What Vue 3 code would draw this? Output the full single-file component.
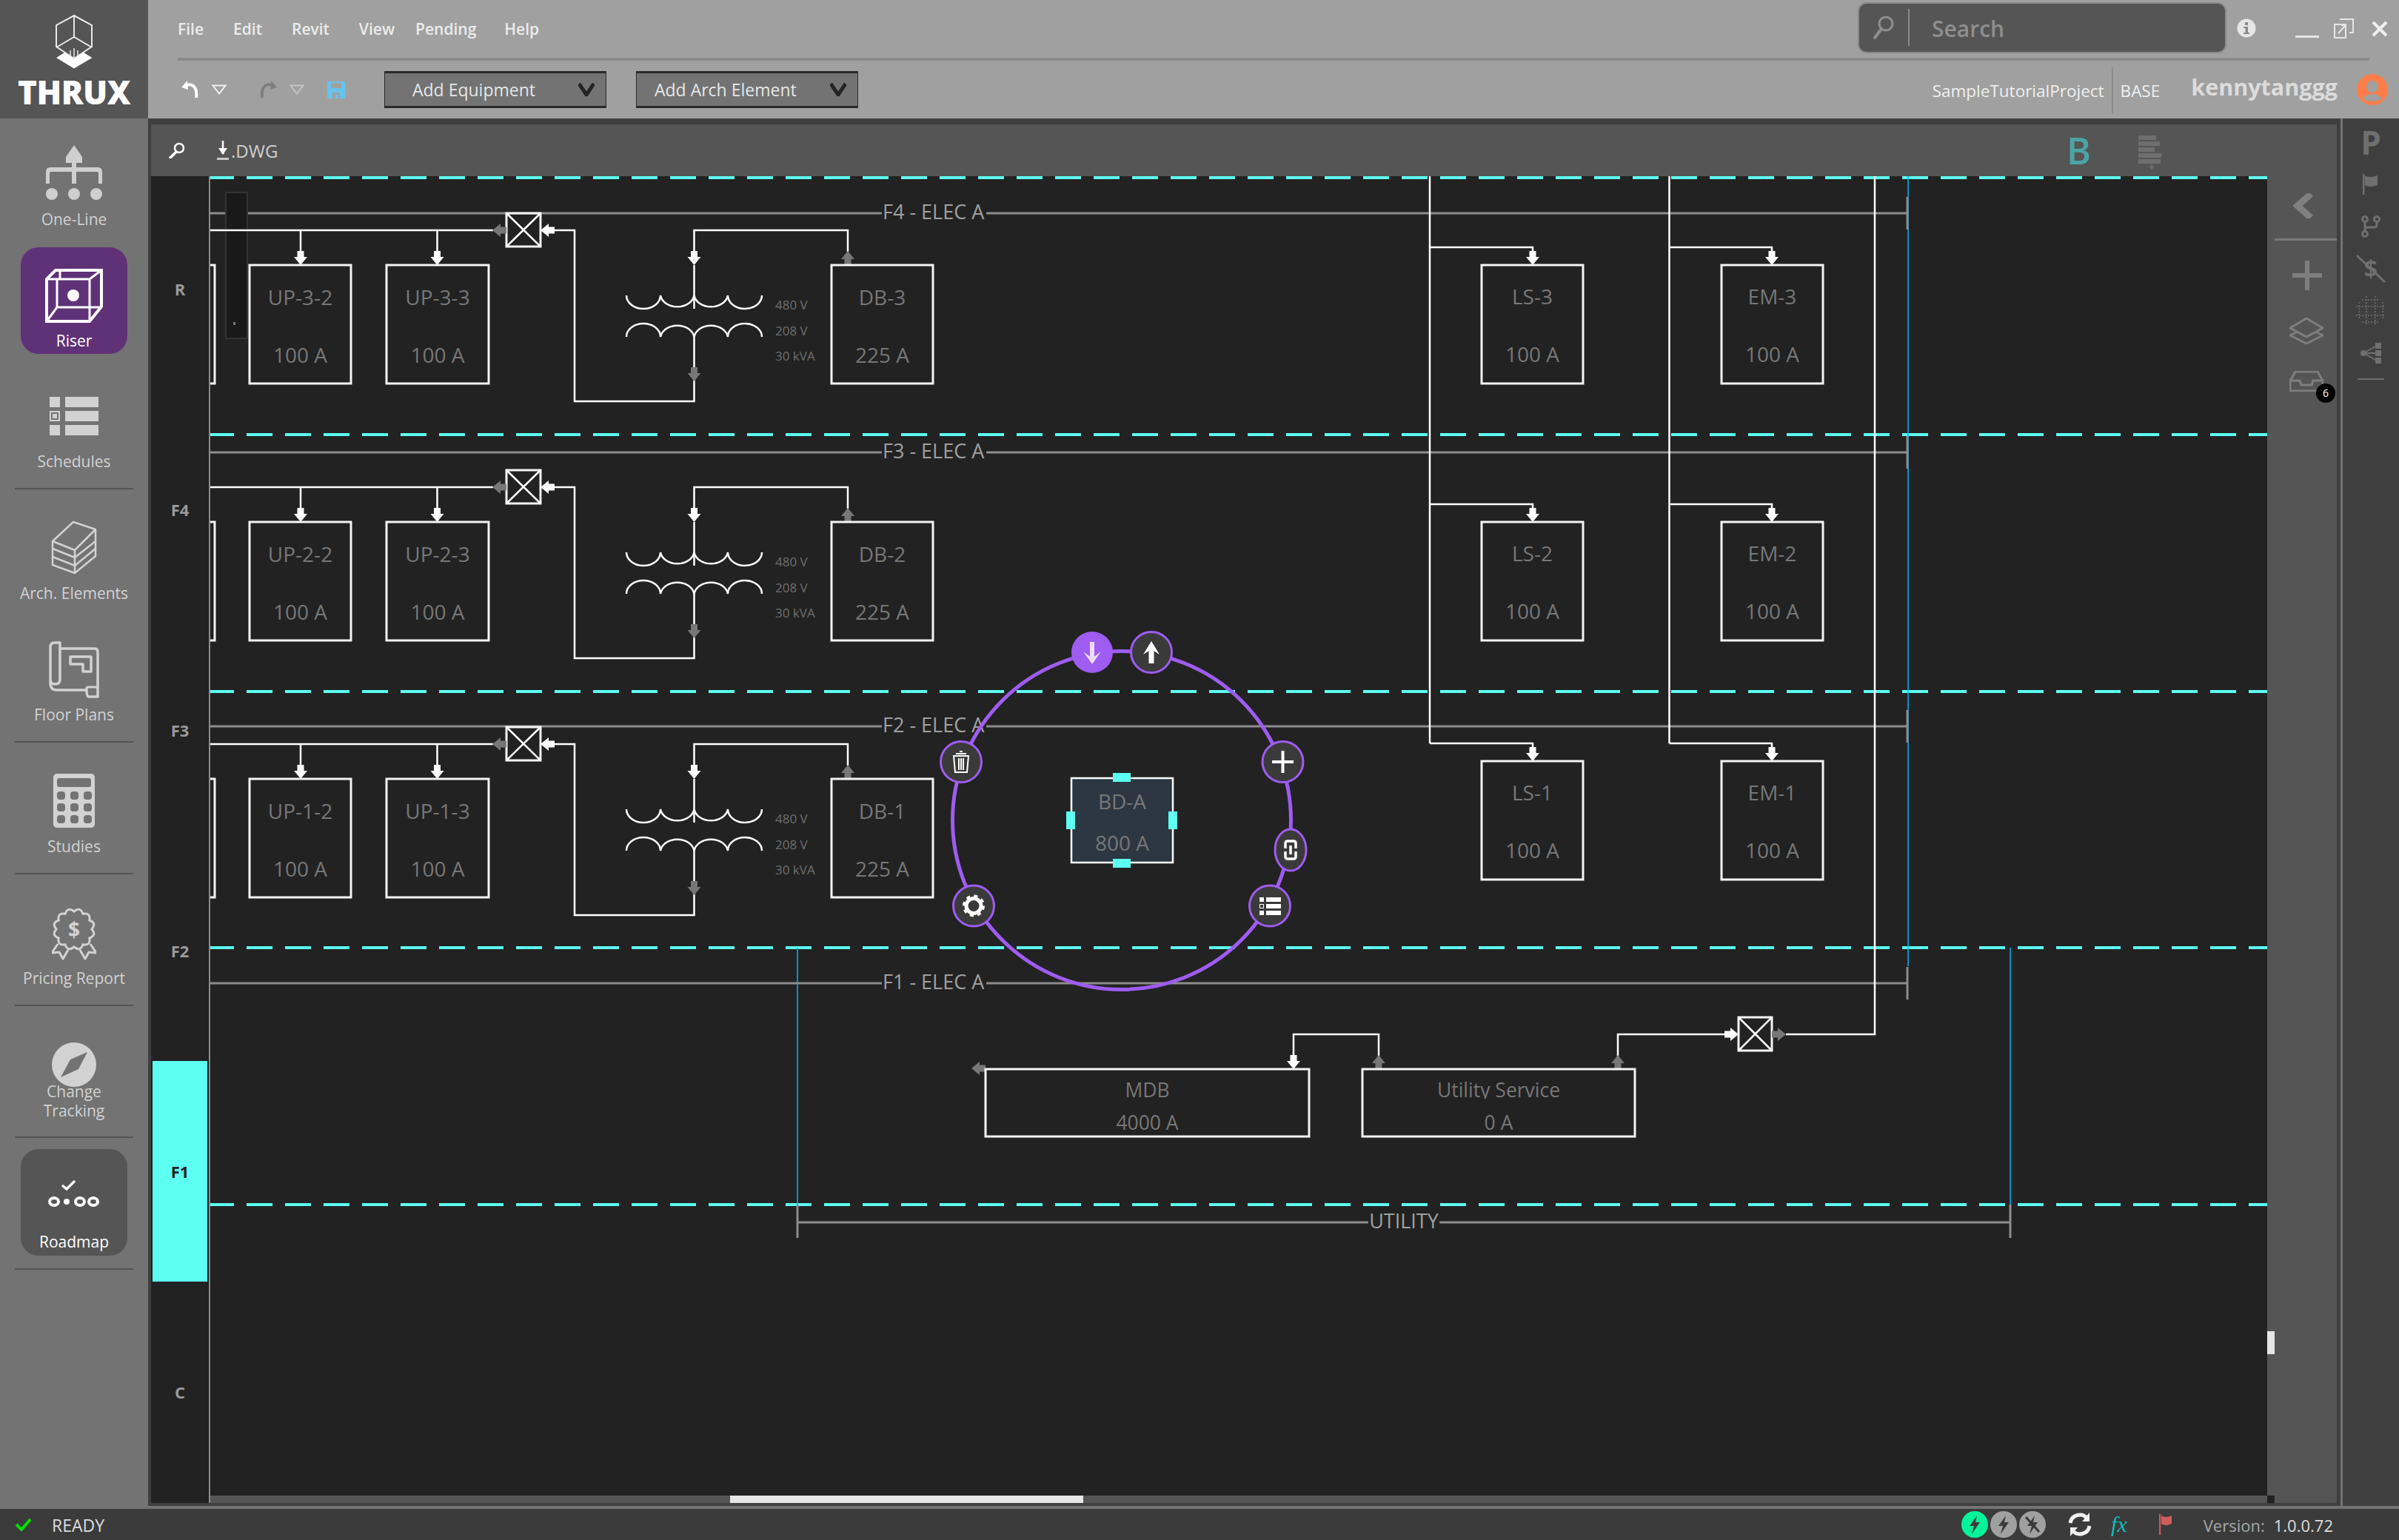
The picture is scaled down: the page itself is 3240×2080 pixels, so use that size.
<template>
  <div class="app">
    <!-- Top bar -->
    <div class="top">
      <div class="logo">
        <svg width="100" height="96" viewBox="50 4 100 96" class="logo-mark">
          <g fill="none" stroke="#e8e8e8" stroke-width="2">
            <path d="M100 21 L124 34 V63 L100 79 L76 63 V34 Z" />
            <path d="M100 21 V50 M76 64 L100 50 L124 64" />
            <path d="M95 68 V77 M100 65 V79 M105 68 V77" stroke-width="1.5" />
          </g>
          <path d="M76 78 L87 71 L100 79 L113 71 L124.5 78 L100 92.5 Z" fill="#fff" />
        </svg>
        <div class="logo-text">THRUX</div>
      </div>
      <div class="header">
        <div class="header-top">
          <div class="menu">
            <span v-for="m in menus" :key="m">{{ m }}</span>
          </div>
          <div class="search">
            <svg width="30" height="34" viewBox="0 0 30 34">
              <circle cx="18" cy="12" r="9" fill="none" stroke="#8f8f8f" stroke-width="3" />
              <path d="M12 19 L3 31" stroke="#8f8f8f" stroke-width="4" stroke-linecap="round" />
            </svg>
            <span class="search-divider"></span>
            <span class="search-text">Search</span>
          </div>
          <svg class="info" width="26" height="26" viewBox="0 0 26 26">
            <circle cx="13" cy="13" r="12.5" fill="#e6e6e6" />
            <rect x="11" y="5" width="4" height="4" fill="#8a8a8a" />
            <path d="M9 11 H15 V19 H17 V21 H9 V19 H11.5 V13 H9 Z" fill="#8a8a8a" />
          </svg>
          <svg class="win-min" width="32" height="4" viewBox="0 0 32 4"><rect width="32" height="3" fill="#e6e6e6" /></svg>
          <svg class="win-max" width="28" height="28" viewBox="0 0 28 28">
            <path d="M8 1 H26 V19 H21 M1 8 H16 V26 H1 Z" fill="none" stroke="#e6e6e6" stroke-width="2" />
            <path d="M6 20 L15 10 M10 9 H16 V15" fill="none" stroke="#e6e6e6" stroke-width="2" />
          </svg>
          <svg class="win-close" width="22" height="22" viewBox="0 0 22 22">
            <path d="M2 2 L20 20 M20 2 L2 20" stroke="#f0f0f0" stroke-width="4" />
          </svg>
        </div>
        <div class="header-line"></div>
        <div class="header-bottom">
          <svg class="undo" width="24" height="24" viewBox="0 0 24 24">
            <path d="M4 8 C12 2 22 6 20 23" fill="none" stroke="#fff" stroke-width="4" />
            <path d="M0 9 L8 0 L9 12 Z" fill="#fff" />
          </svg>
          <svg class="tri" width="20" height="14" viewBox="0 0 20 14"><path d="M1.5 1.5 H18.5 L10 12.5 Z" fill="none" stroke="#efefef" stroke-width="2" /></svg>
          <svg class="redo" width="24" height="24" viewBox="0 0 24 24">
            <path d="M20 8 C12 2 2 6 4 23" fill="none" stroke="#7e7e7e" stroke-width="4" />
            <path d="M24 9 L16 0 L15 12 Z" fill="#7e7e7e" />
          </svg>
          <svg class="tri" width="20" height="14" viewBox="0 0 20 14"><path d="M1.5 1.5 H18.5 L10 12.5 Z" fill="none" stroke="#c4c4c4" stroke-width="2" /></svg>
          <svg class="save" width="24" height="23" viewBox="0 0 24 23">
            <path d="M0 0 H24 V23 H0 Z M5 2 V9 H19 V2 Z M7 15 V23 H11 V18 H15 V23 H17 V15 Z" fill="#66c3ee" fill-rule="evenodd" />
          </svg>
          <div class="drop drop-equip">
            <span>Add Equipment</span>
            <svg width="22" height="18" viewBox="0 0 22 18"><path d="M1 1 L11 16 L21 1" fill="none" stroke="#242424" stroke-width="5" /></svg>
          </div>
          <div class="drop drop-arch">
            <span>Add Arch Element</span>
            <svg width="22" height="18" viewBox="0 0 22 18"><path d="M1 1 L11 16 L21 1" fill="none" stroke="#242424" stroke-width="5" /></svg>
          </div>
          <div class="project">
            <span>SampleTutorialProject</span>
            <span class="project-divider"></span>
            <span>BASE</span>
          </div>
          <div class="user">kennytanggg</div>
          <svg class="avatar" width="42" height="42" viewBox="0 0 42 42">
            <circle cx="21" cy="21" r="21" fill="#ff7d48" />
            <circle cx="21" cy="17" r="8" fill="#a0a0a0" />
            <path d="M8 33 C14 25 28 25 34 33 C28 38 14 38 8 33 Z" fill="#a0a0a0" />
          </svg>
        </div>
      </div>
    </div>

    <div class="main">
      <!-- Left nav -->
      <div class="sidebar">
        <div class="nav nav-oneline">
          <svg width="76" height="74" viewBox="0 0 76 74">
            <path d="M38 0 L49 16 V24 H41 V30 H70 Q76 30 76 36 V52 H71 V38 Q71 36 69 36 H41 V52 H35 V36 H7 Q5 36 5 38 V52 H0 V36 Q0 30 6 30 H35 V24 H27 V16 Z" fill="#cfcfcf" />
            <ellipse cx="8" cy="66" rx="8" ry="8" fill="#cfcfcf" />
            <ellipse cx="38" cy="66" rx="8" ry="8" fill="#cfcfcf" />
            <ellipse cx="68" cy="66" rx="8" ry="8" fill="#cfcfcf" />
          </svg>
          <div class="nav-label">One-Line</div>
        </div>
        <div class="nav nav-riser">
          <svg width="78" height="73" viewBox="0 0 78 73">
            <g fill="none" stroke="#fff" stroke-width="4">
              <path d="M2 14 L14 2 H76 V51 L60 71 H2 Z" />
              <path d="M2 14 H60 V71 M60 14 L76 2 M20 14 V2 M2 71 L16 52 H76 M16 14 V52" stroke-width="3" />
            </g>
            <ellipse cx="38" cy="36" rx="8" ry="8" fill="#fff" />
          </svg>
          <div class="nav-label">Riser</div>
        </div>
        <div class="nav nav-schedules">
          <svg width="66" height="52" viewBox="0 0 66 52">
            <g fill="#d2d2d2">
              <rect width="14" height="14" />
              <rect x="21" width="45" height="14" />
              <rect x="21" y="19" width="45" height="14" />
              <rect y="38" width="14" height="14" />
              <rect x="21" y="38" width="45" height="14" />
            </g>
            <rect x="1" y="20" width="12" height="12" fill="none" stroke="#d2d2d2" stroke-width="2" />
            <rect x="4" y="23" width="6" height="6" fill="#d2d2d2" />
          </svg>
          <div class="nav-label">Schedules</div>
        </div>
        <div class="sep"></div>
        <div class="nav nav-arch">
          <svg width="62" height="73" viewBox="0 0 62 73">
            <g fill="none" stroke="#d2d2d2" stroke-width="2.5" stroke-linejoin="round">
              <path d="M2 28 L30 2 L60 12 L32 40 Z" />
              <path d="M2 28 V60 L32 71 L60 48 V12 M32 40 V71" />
              <path d="M2 38 L32 50 L60 28 M2 49 L32 61 L60 38" />
            </g>
          </svg>
          <div class="nav-label">Arch. Elements</div>
        </div>
        <div class="nav nav-floor">
          <svg width="68" height="77" viewBox="0 0 68 77">
            <g fill="none" stroke="#d2d2d2" stroke-width="3.5" stroke-linejoin="round">
              <path d="M15 10 H62 Q66 10 66 15 V75 H54 Q51 75 51 66 H10 Q2 66 2 56 V8 Q2 2 8 2 H15 V52 Q15 58 8 58 Q2 58 2 52" />
              <path d="M51 62 V66 M51 62 H66" stroke-width="3" />
              <path d="M29 21 H57 V41 H46 V31 H29 Z" />
            </g>
          </svg>
          <div class="nav-label">Floor Plans</div>
        </div>
        <div class="sep"></div>
        <div class="nav nav-studies">
          <svg width="56" height="73" viewBox="0 0 56 73">
            <rect width="56" height="73" rx="5" fill="#d2d2d2" />
            <rect x="5" y="6" width="46" height="12" rx="3" fill="#737373" />
            <template v-for="row in [24, 40, 56]" :key="row">
              <rect v-for="col in [5, 23, 41]" :key="col" :x="col" :y="row" width="11" height="11" rx="4" fill="#737373" />
            </template>
          </svg>
          <div class="nav-label">Studies</div>
        </div>
        <div class="sep"></div>
        <div class="nav nav-pricing">
          <svg width="60" height="72" viewBox="0 0 60 72">
            <path :d="badgePath" fill="none" stroke="#d2d2d2" stroke-width="3" />
            <text x="30" y="30" class="dollar" text-anchor="middle">$</text>
            <path d="M8 50 L0 62 L10 61 L15 70 L22 58 M52 50 L60 62 L50 61 L45 70 L38 58" fill="none" stroke="#d2d2d2" stroke-width="3" stroke-linejoin="round" />
          </svg>
          <div class="nav-label">Pricing Report</div>
        </div>
        <div class="sep"></div>
        <div class="nav nav-change">
          <svg width="60" height="60" viewBox="0 0 60 60">
            <circle cx="30" cy="30" r="30" fill="#d2d2d2" />
            <path d="M48 13 L25 23 L12 47 L36 36 Z" fill="#737373" />
          </svg>
          <div class="nav-label">Change<br />Tracking</div>
        </div>
        <div class="sep"></div>
        <div class="nav nav-roadmap">
          <svg width="70" height="38" viewBox="0 0 70 38">
            <path d="M19 7 L25 12 L36 1" fill="none" stroke="#fff" stroke-width="3.5" />
            <g fill="none" stroke="#fff" stroke-width="4">
              <ellipse cx="8" cy="29" rx="6" ry="5" />
              <ellipse cx="43" cy="29" rx="6" ry="5" />
              <ellipse cx="61" cy="29" rx="6" ry="5" />
            </g>
            <circle cx="25" cy="29" r="4" fill="#fff" />
          </svg>
          <div class="nav-label">Roadmap</div>
        </div>
        <div class="sep sep-last"></div>
      </div>

      <!-- Work area -->
      <div class="work">
        <div class="tools">
          <svg class="tool-search" width="22" height="22" viewBox="0 0 22 22">
            <circle cx="14" cy="8" r="6" fill="none" stroke="#fff" stroke-width="2.5" />
            <path d="M10 13 L2 21" stroke="#fff" stroke-width="3.5" stroke-linecap="round" />
          </svg>
          <svg class="tool-down" width="18" height="28" viewBox="0 0 18 28">
            <path d="M9 1 V19" stroke="#fff" stroke-width="2.5" />
            <path d="M3 11 L9 20 L15 11 Z" fill="#fff" />
            <rect x="1" y="24" width="16" height="3" fill="#c8c8c8" />
          </svg>
          <span class="tool-dwg">.DWG</span>
          <span class="tool-b">B</span>
          <svg class="tool-sort" width="32" height="46" viewBox="0 0 32 46">
            <g fill="#6f6f6f">
              <rect width="24" height="6" />
              <rect y="8" width="29" height="6" />
              <rect y="16" width="22" height="6" />
              <rect y="24" width="31" height="6" />
              <rect y="32" width="30" height="6" />
            </g>
            <path d="M18 37 V45 M15 41 L18 45 L21 41" fill="none" stroke="#6f6f6f" stroke-width="1.5" />
          </svg>
        </div>
        <div class="body">
          <div class="floors">
            <div v-for="f in floors" :key="f" class="floor" :class="{ active: f === 'F1' }">{{ f }}</div>
          </div>
          <div class="canvas-wrap">
            <svg class="riser" width="2778" height="1782" viewBox="284 238 2778 1782">
              <defs>
                <clipPath id="wide-name"><rect x="1331" y="1444" width="877" height="40" /></clipPath>
              </defs>

              <!-- level lines -->
              <path v-for="y in levels" :key="y" :d="`M281 ${y} H3062`" class="level" />

              <!-- blue guides -->
              <path d="M2577 238 V1305 M1077 1280 V1627 M2715 1280 V1627" class="guide" />

              <!-- feeder lines with names -->
              <template v-for="b in buses" :key="b.label">
                <path :d="`M284 ${b.y} H1191 M1332 ${b.y} H2575`" class="bus" />
                <path :d="`M2576 ${b.y - 22} V${b.y + 22}`" class="bus" />
                <text x="1192" :y="b.y - 3" class="bus-label">{{ b.label }}</text>
              </template>
              <path d="M1077 1651 H1848 M1944 1651 H2715 M1077 1627 V1672 M2715 1627 V1672" class="bus" />
              <text x="1896" y="1648" class="bus-label" text-anchor="middle">UTILITY</text>

              <!-- scroller that sits on the top row -->
              <rect x="305" y="260" width="29" height="197" fill="#191919" stroke="#333" stroke-width="2" />
              <rect x="315" y="435" width="3" height="4" fill="#777" />

              <!-- wires -->
              <path v-for="(w, i) in wires" :key="i" :d="w" class="wire" />
              <path d="M846 399 A23 18 0 0 0 892 399 A23 18 0 0 0 937.5 399 A23 18 0 0 0 983 399 A23 18 0 0 0 1029 399" class="wire" v-for="dy in rowOffsets" :key="'a' + dy" :transform="`translate(0 ${dy})`" />
              <path d="M846 455 A23 18 0 0 1 892 455 A23 18 0 0 1 937.5 455 A23 18 0 0 1 983 455 A23 18 0 0 1 1029 455" class="wire" v-for="dy in rowOffsets" :key="'b' + dy" :transform="`translate(0 ${dy})`" />

              <!-- breakers -->
              <g v-for="b in breakers" :key="b.x + '-' + b.y">
                <rect :x="b.x" :y="b.y" :width="b.w" height="45" class="box" />
                <path :d="`M${b.x} ${b.y} L${b.x + b.w} ${b.y + 45} M${b.x + b.w} ${b.y} L${b.x} ${b.y + 45}`" class="wire" />
              </g>

              <!-- arrows -->
              <polygon v-for="(a, i) in whiteArrows" :key="'w' + i" :points="arrow(a[0], a[1], a[2])" fill="#fff" />
              <polygon v-for="(a, i) in grayArrows" :key="'g' + i" :points="arrow(a[0], a[1], a[2])" fill="#777" />

              <!-- panels -->
              <g v-for="p in panels" :key="p.name">
                <rect :x="p.x" :y="p.y" :width="p.w" :height="p.h" class="box" />
                <text :x="p.x + p.w / 2" :y="p.t1" class="panel-text" :class="{ wide: p.h < 100 }" :clip-path="p.h < 100 ? 'url(#wide-name)' : null" text-anchor="middle">{{ p.name }}</text>
                <text :x="p.x + p.w / 2" :y="p.t2" class="panel-text" :class="{ wide: p.h < 100 }" text-anchor="middle">{{ p.amps }}</text>
              </g>
              <path v-for="dy in rowOffsets" :key="'c' + dy" :d="`M284 ${358 + dy} H290 V${518 + dy} H284`" class="box-edge" />

              <!-- transformer ratings -->
              <template v-for="dy in rowOffsets" :key="'t' + dy">
                <text x="1047" :y="411 + dy" class="rating">480 V</text>
                <text x="1047" :y="446 + dy" class="rating">208 V</text>
                <text x="1047" :y="480 + dy" class="rating">30 kVA</text>
              </template>

              <!-- radial menu -->
              <circle cx="1515" cy="1108" r="228.5" class="ring" />
              <rect x="1447" y="1051" width="137" height="114" fill="#2c3743" stroke="#fff" stroke-width="2.5" />
              <text x="1515.5" y="1082" class="panel-text" text-anchor="middle">BD-A</text>
              <text x="1515.5" y="1138" class="panel-text" text-anchor="middle">800 A</text>
              <g fill="#5cfff2">
                <rect x="1503" y="1044" width="24" height="12" />
                <rect x="1503" y="1160" width="24" height="12" />
                <rect x="1440" y="1096" width="12" height="24" />
                <rect x="1578" y="1096" width="12" height="24" />
              </g>
              <circle cx="1475" cy="881" r="28" fill="#9f5cf0" />
              <path d="M1475 867 V894" stroke="#ecdcff" stroke-width="6" />
              <path d="M1463 880 L1475 897 L1487 880 L1475 889 Z" fill="#ecdcff" />
              <circle cx="1555" cy="881" r="27.5" class="ring-btn" />
              <path d="M1555 871 V896" stroke="#fff" stroke-width="7" />
              <path d="M1544 884 L1555 866 L1566 884 L1555 877 Z" fill="#fff" />
              <circle cx="1298" cy="1029" r="27.5" class="ring-btn" />
              <path d="M1288 1021 H1308 L1306 1043 H1290 Z M1291 1018 H1305 M1296 1015 H1300 M1295 1024 V1040 M1298 1024 V1040 M1301 1024 V1040" fill="none" stroke="#fff" stroke-width="2" />
              <circle cx="1732.5" cy="1029" r="27.5" class="ring-btn" />
              <path d="M1718 1029 H1747 M1732.5 1014 V1044" stroke="#fff" stroke-width="4" />
              <ellipse cx="1743" cy="1148" rx="21" ry="28" class="ring-btn" />
              <path d="M1736 1146 V1139 Q1736 1136 1739 1136 H1747 Q1750 1136 1750 1139 V1146 M1736 1150 V1157 Q1736 1160 1739 1160 H1747 Q1750 1160 1750 1157 V1150 M1743 1142 V1154" fill="none" stroke="#fff" stroke-width="3.5" />
              <circle cx="1315" cy="1223.5" r="27.5" class="ring-btn" />
              <circle cx="1315" cy="1223.5" r="10" fill="none" stroke="#fff" stroke-width="5" />
              <circle cx="1315" cy="1223.5" r="13" fill="none" stroke="#fff" stroke-width="4" stroke-dasharray="5 5.2" />
              <circle cx="1715" cy="1223.5" r="27.5" class="ring-btn" />
              <g fill="#fff">
                <rect x="1701" y="1212" width="6" height="6" />
                <rect x="1710" y="1212" width="20" height="6" />
                <rect x="1710" y="1221" width="20" height="6" />
                <rect x="1701" y="1230" width="6" height="6" />
                <rect x="1710" y="1230" width="20" height="6" />
              </g>
              <rect x="1701.5" y="1221.5" width="5" height="5" fill="none" stroke="#fff" stroke-width="1" />
            </svg>
            <div class="hscroll"><div class="hthumb"></div></div>
          </div>
          <div class="panel">
            <div class="vthumb"></div>
            <div class="corner"></div>
            <svg class="p-chevron" width="30" height="34" viewBox="0 0 30 34"><path d="M24 1 L6 17 L24 33" fill="none" stroke="#808080" stroke-width="9" /></svg>
            <div class="panel-sep"></div>
            <svg class="p-plus" width="40" height="40" viewBox="0 0 40 40"><path d="M0 20 H40 M20 0 V40" stroke="#7e7e7e" stroke-width="6" /></svg>
            <svg class="p-layers" width="46" height="36" viewBox="0 0 46 36">
              <path d="M23 1 L45 14 L23 26 L1 14 Z" fill="none" stroke="#7e7e7e" stroke-width="3" />
              <path d="M9 20 L1 24 L23 35 L45 24 L37 20" fill="none" stroke="#7e7e7e" stroke-width="3" />
            </svg>
            <div class="p-inbox">
              <svg width="46" height="28" viewBox="0 0 46 28">
                <path d="M1 13 L8 1 H38 L45 13 V27 H1 Z M1 13 H14 L16 19 H30 L32 13 H45" fill="none" stroke="#7e7e7e" stroke-width="3" />
              </svg>
              <span class="badge">6</span>
            </div>
          </div>
        </div>
      </div>

      <!-- Right strip -->
      <div class="strip">
        <div class="strip-slot"><span class="strip-p">P</span></div>
        <div class="strip-slot">
          <svg width="22" height="28" viewBox="0 0 22 28">
            <path d="M1 0 V28" stroke="#6f6f6f" stroke-width="3" />
            <path d="M3 2 Q9 6 20 2 V15 Q9 19 3 15 Z" fill="#6f6f6f" />
          </svg>
        </div>
        <div class="strip-slot">
          <svg width="26" height="32" viewBox="0 0 26 32">
            <g fill="none" stroke="#6f6f6f" stroke-width="3">
              <circle cx="5" cy="6" r="3.5" />
              <circle cx="21" cy="6" r="3.5" />
              <circle cx="5" cy="26" r="3.5" />
              <path d="M5 10 V22 M21 10 V14 Q21 17 17 17 H9 Q5 17 5 20" />
            </g>
          </svg>
        </div>
        <div class="strip-slot">
          <div class="strip-dollar">
            $
            <svg width="40" height="38" viewBox="0 0 40 38"><path d="M1 1 L39 37" stroke="#6f6f6f" stroke-width="3" /></svg>
          </div>
        </div>
        <div class="strip-slot">
          <svg width="42" height="42" viewBox="0 0 42 42">
            <g fill="none" stroke="#646464" stroke-width="2" stroke-dasharray="2 2">
              <path d="M15 1 V41 M27 1 V41 M1 15 H41 M1 27 H41" />
              <path d="M9 6 H33 M5 9 V33 M37 9 V33 M9 36 H33" />
            </g>
          </svg>
        </div>
        <div class="strip-slot">
          <svg width="28" height="28" viewBox="0 0 28 28">
            <g fill="#6f6f6f">
              <circle cx="4" cy="14" r="4" />
              <rect x="20" y="0" width="8" height="8" />
              <rect x="20" y="10" width="8" height="8" />
              <rect x="20" y="20" width="8" height="8" />
            </g>
            <path d="M4 14 L22 4 M4 14 H22 M4 14 L22 24" stroke="#6f6f6f" stroke-width="2" />
          </svg>
        </div>
        <div class="strip-sep"></div>
      </div>
    </div>

    <!-- Status bar -->
    <div class="status">
      <svg class="ok" width="21" height="18" viewBox="0 0 21 18"><path d="M1 9 L8 16 L20 2" fill="none" stroke="#00e000" stroke-width="4" /></svg>
      <span class="ready">READY</span>
      <div class="status-right">
        <div class="bolts">
          <svg v-for="(c, i) in ['#00f59b', '#a0a0a0', '#a0a0a0']" :key="i" width="36" height="36" viewBox="0 0 36 36">
            <circle cx="18" cy="18" r="18" :fill="c" />
            <path d="M21 6 L11 20 H17 L14 31 L25 15 H19 Z" fill="#3b3b3b" />
            <path v-if="i === 2" d="M9 8 L27 28" stroke="#3b3b3b" stroke-width="3" />
          </svg>
        </div>
        <svg class="sync" width="32" height="34" viewBox="0 0 32 34">
          <path d="M3 15 A13 13 0 0 1 26 9 M29 19 A13 13 0 0 1 6 25" fill="none" stroke="#f0f0f0" stroke-width="5" />
          <path d="M29 1 V13 H19 Z M3 33 V21 H13 Z" fill="#f0f0f0" />
        </svg>
        <span class="fx">fx</span>
        <svg class="flag" width="18" height="28" viewBox="0 0 18 28">
          <path d="M1 0 V28" stroke="#c95a5a" stroke-width="2.5" />
          <path d="M3 2 Q9 6 17 2 V13 Q9 17 3 13 Z" fill="#d05c5c" />
        </svg>
        <span class="version">Version:</span>
        <span class="version-no">1.0.0.72</span>
      </div>
    </div>
  </div>
</template>

<script setup>
const menus = ['File', 'Edit', 'Revit', 'View', 'Pending', 'Help']
const floors = ['R', 'F4', 'F3', 'F2', 'F1', 'C']
const levels = [240, 587, 934, 1280, 1627]
const rowOffsets = [0, 347, 694]

const buses = [
  { label: 'F4 - ELEC A', y: 288 },
  { label: 'F3 - ELEC A', y: 611 },
  { label: 'F2 - ELEC A', y: 981 },
  { label: 'F1 - ELEC A', y: 1328 }
]

// Arrow polygon, tip at x,y
const arrow = (x, y, dir) => {
  const [dx, dy] = { down: [0, 1], up: [0, -1], left: [-1, 0], right: [1, 0] }[dir]
  const px = -dy
  const py = dx
  const at = (back, side) => `${x - dx * back + px * side},${y - dy * back + py * side}`
  return [at(0, 0), at(11, 9), at(11, 4.5), at(19, 4.5), at(19, -4.5), at(11, -4.5), at(11, -9)].join(' ')
}

const wires = []
const whiteArrows = []
const grayArrows = []
const panels = []
const breakers = []

rowOffsets.forEach((dy, i) => {
  const n = 3 - i
  wires.push(`M284 ${311 + dy} H666`)
  wires.push(`M406 ${311 + dy} V${340 + dy}`)
  wires.push(`M590.5 ${311 + dy} V${340 + dy}`)
  wires.push(`M748 ${311 + dy} H776 V${542 + dy} H937.5 V${455 + dy}`)
  wires.push(`M937.5 ${340 + dy} V${311 + dy} H1145 V${340 + dy}`)
  wires.push(`M937.5 ${358 + dy} V${417 + dy}`)
  breakers.push({ x: 684, y: 288 + dy, w: 46 })
  whiteArrows.push([406, 358 + dy, 'down'], [590.5, 358 + dy, 'down'], [937.5, 358 + dy, 'down'], [730, 311 + dy, 'left'])
  grayArrows.push([665, 311 + dy, 'left'], [1145, 339 + dy, 'up'], [937.5, 515 + dy, 'down'])
  panels.push(
    { name: `UP-${n}-2`, amps: '100 A', x: 337, y: 358 + dy, w: 137, h: 160, t1: 401 + dy, t2: 479 + dy },
    { name: `UP-${n}-3`, amps: '100 A', x: 522, y: 358 + dy, w: 138, h: 160, t1: 401 + dy, t2: 479 + dy },
    { name: `DB-${n}`, amps: '225 A', x: 1123, y: 358 + dy, w: 137, h: 160, t1: 401 + dy, t2: 479 + dy }
  )
})

// Branch risers on the right
wires.push('M1931 238 V1004', 'M2254.5 238 V1004', 'M2532 238 V1397 H2412')
;[[334, 358, 3], [681, 705, 2], [1004, 1028, 1]].forEach(([y, top, n]) => {
  wires.push(`M1931 ${y} H2070 V${top - 10}`, `M2254.5 ${y} H2393 V${top - 10}`)
  whiteArrows.push([2070, top, 'down'], [2393, top, 'down'])
  panels.push(
    { name: `LS-${n}`, amps: '100 A', x: 2001, y: top, w: 137, h: 160, t1: top + 42, t2: top + 120 },
    { name: `EM-${n}`, amps: '100 A', x: 2325, y: top, w: 137, h: 160, t1: top + 42, t2: top + 120 }
  )
})

// Service level
wires.push('M1747 1430 V1397 H1862 V1430', 'M2185 1430 V1397 H2330')
whiteArrows.push([1747, 1444, 'down'], [2348, 1397, 'right'])
grayArrows.push([1862, 1425, 'up'], [2185, 1425, 'up'], [1312, 1443, 'left'], [2412, 1397, 'right'])
breakers.push({ x: 2348, y: 1374, w: 45 })
panels.push(
  { name: 'MDB', amps: '4000 A', x: 1331, y: 1444, w: 437, h: 91, t1: 1472, t2: 1516 },
  { name: 'Utility Service', amps: '0 A', x: 1840, y: 1444, w: 368, h: 91, t1: 1472, t2: 1516 }
)

// Scalloped outline of the pricing badge
const badgePath = (() => {
  const lobes = 12
  const pts = []
  for (let i = 0; i < lobes; i++) {
    const a0 = (i / lobes) * Math.PI * 2
    const a1 = ((i + 0.5) / lobes) * Math.PI * 2
    const a2 = ((i + 1) / lobes) * Math.PI * 2
    pts.push(
      `${i === 0 ? `M${(30 + 24 * Math.cos(a0)).toFixed(1)} ${(30 + 24 * Math.sin(a0)).toFixed(1)} ` : ''}Q${(30 + 32 * Math.cos(a1)).toFixed(1)} ${(30 + 32 * Math.sin(a1)).toFixed(1)} ${(30 + 24 * Math.cos(a2)).toFixed(1)} ${(30 + 24 * Math.sin(a2)).toFixed(1)}`
    )
  }
  return pts.join(' ') + ' Z'
})()
</script>

<style>
html,
body {
  margin: 0;
  background: #3b3b3b;
}
</style>

<style scoped>
.app {
  width: 3240px;
  height: 2080px;
  display: flex;
  flex-direction: column;
  font-family: "Open Sans", "Noto Sans", sans-serif;
  overflow: hidden;
}

/* Top bar */
.top {
  height: 160px;
  display: flex;
  background: #a0a0a0;
  flex-shrink: 0;
}

.logo {
  width: 200px;
  background: #555;
  display: flex;
  flex-direction: column;
  align-items: center;
}

.logo-mark {
  margin-top: 4px;
}

.logo-text {
  color: #fff;
  font-size: 44px;
  font-weight: 800;
  line-height: 44px;
  letter-spacing: -0.5px;
  margin-top: 2px;
}

.header {
  flex: 1;
  padding-left: 40px;
  padding-right: 40px;
  display: flex;
  flex-direction: column;
}

.header-top {
  height: 78px;
  display: flex;
  align-items: center;
}

.menu {
  display: flex;
  gap: 40px;
  color: #ececec;
  font-size: 21px;
  font-weight: 600;
}

.menu span:nth-child(5) {
  margin-left: -12px;
}

.menu span:nth-child(6) {
  margin-left: -2px;
}

.search {
  margin-left: auto;
  width: 498px;
  height: 69px;
  box-sizing: border-box;
  margin-bottom: 4px;
  background: #555;
  border: 2px solid #8a8a8a;
  border-radius: 12px;
  display: flex;
  align-items: center;
  padding-left: 18px;
}

.search-divider {
  width: 2px;
  height: 50px;
  background: #8a8a8a;
  margin-left: 18px;
}

.search-text {
  margin-left: 30px;
  margin-top: 2px;
  color: #8f8f8f;
  font-size: 30px;
  font-weight: 600;
}

.info {
  margin-left: 14px;
  margin-bottom: 2px;
}

.win-min {
  margin-left: 53px;
  margin-top: 22px;
}

.win-max {
  margin-left: 20px;
}

.win-close {
  margin-left: 23px;
  margin-right: -25px;
}

.header-line {
  height: 4px;
  background: #8a8a8a;
  flex-shrink: 0;
}

.header-bottom {
  flex: 1;
  display: flex;
  align-items: center;
  color: #eee;
  margin-right: -25px;
}

.undo {
  margin-left: 5px;
}

.tri {
  margin-left: 17px;
}

.redo {
  margin-left: 44px;
}

.save {
  margin-left: 31px;
}

.drop {
  height: 50px;
  box-sizing: border-box;
  background: #737373;
  border-top: 3px solid #2a2a2a;
  border-bottom: 3px solid #2a2a2a;
  border-left: 1px solid #2a2a2a;
  border-right: 1px solid #2a2a2a;
  display: flex;
  align-items: center;
  justify-content: space-between;
  color: #e6e6e6;
  font-size: 23px;
}

.drop-equip {
  width: 300px;
  margin-left: 53px;
  padding: 0 15px 0 37px;
}

.drop-arch {
  width: 300px;
  margin-left: 40px;
  padding: 0 15px 0 24px;
}

.project {
  margin-left: auto;
  display: flex;
  align-items: center;
  font-size: 22.5px;
  color: #f0f0f0;
  padding-top: 2px;
}

.project-divider {
  width: 2px;
  height: 62px;
  background: #8a8a8a;
  margin: 0 10px;
}

.user {
  margin-left: 42px;
  font-size: 30.5px;
  font-weight: 700;
  color: #dcdcdc;
  margin-bottom: 8px;
}

.avatar {
  margin-left: 26px;
}

/* Main */
.main {
  flex: 1;
  display: flex;
  border-bottom: 4px solid #737373;
  min-height: 0;
}

.sidebar {
  width: 200px;
  flex-shrink: 0;
  background: #737373;
  color: #d2d2d2;
}

.nav {
  width: 144px;
  margin: 0 28px;
  display: flex;
  flex-direction: column;
  align-items: center;
  box-sizing: border-box;
  flex-shrink: 0;
}

.nav-label {
  font-size: 21px;
  line-height: 30px;
  text-align: center;
  white-space: nowrap;
}

.nav-oneline { height: 174px; padding-top: 36px; }
.nav-oneline .nav-label { margin-top: 11px; }

.nav-riser {
  height: 144px;
  padding-top: 29px;
  background: #5f3278;
  border-radius: 24px;
  color: #fff;
}
.nav-riser .nav-label { margin-top: 9px; }

.nav-schedules { height: 181px; padding-top: 58px; }
.nav-schedules .nav-label { margin-top: 20px; }

.nav-arch { height: 155px; padding-top: 42px; }
.nav-arch .nav-label { margin-top: 10px; }

.nav-floor { height: 185px; padding-top: 50px; }
.nav-floor .nav-label { margin-top: 7px; }

.nav-studies { height: 176px; padding-top: 42px; }
.nav-studies .nav-label { margin-top: 10px; }

.nav-pricing { height: 176px; padding-top: 44px; }
.nav-pricing .nav-label { margin-top: 9px; }

.nav-change { height: 176px; padding-top: 49px; }
.nav-change .nav-label { margin-top: -7px; line-height: 26px; }

.nav-roadmap {
  height: 144px;
  margin-top: 15px;
  padding-top: 42px;
  background: #555;
  border-radius: 24px;
  color: #fff;
}
.nav-roadmap .nav-label { margin-top: 30px; }

.sep {
  height: 2px;
  margin: 0 20px;
  background: #555;
}

.sep-last {
  margin-top: 17px;
}

.dollar {
  font-size: 28px;
  font-weight: 700;
  fill: #d2d2d2;
  dominant-baseline: central;
  font-family: "Open Sans", sans-serif;
}

.work {
  flex: 1;
  min-width: 0;
  background: #3f3f3f;
  padding: 8px 5px 4px 4px;
  display: flex;
  flex-direction: column;
}

.tools {
  height: 70px;
  flex-shrink: 0;
  background: #555;
  display: flex;
  align-items: center;
  position: relative;
}

.tool-search {
  margin-left: 24px;
}

.tool-down {
  margin-left: 42px;
}

.tool-dwg {
  margin-left: 2px;
  color: #d0d0d0;
  font-size: 24px;
}

.tool-b {
  margin-left: auto;
  color: #4ba5a5;
  font-size: 50px;
  font-weight: 600;
  line-height: 50px;
}

.tool-sort {
  margin-left: 64px;
  margin-right: 236px;
  margin-top: 6px;
}

.body {
  flex: 1;
  display: flex;
  min-height: 0;
}

.floors {
  width: 78px;
  flex-shrink: 0;
  background: #222;
  border-right: 2px solid #8a8a8a;
  padding-top: 3px;
  box-sizing: content-box;
  display: grid;
  grid-auto-rows: 298px;
  align-content: start;
}

.floor {
  display: flex;
  align-items: center;
  justify-content: center;
  margin: 0 2px;
  color: #9a9a9a;
  font-size: 22px;
  font-weight: 700;
}

.floor.active {
  background: #5cfff2;
  color: #222;
}

.canvas-wrap {
  width: 2778px;
  flex-shrink: 0;
  display: flex;
  flex-direction: column;
}

.riser {
  display: block;
  background: #222;
  font-family: "Open Sans", sans-serif;
}

.level {
  stroke: #5cfff2;
  stroke-width: 4;
  stroke-dasharray: 35 17;
  fill: none;
}

.guide {
  stroke: #00b4ff;
  stroke-width: 1.5;
  fill: none;
}

.bus {
  stroke: #8c8c8c;
  stroke-width: 3;
  fill: none;
}

.bus-label {
  fill: #a0a0a0;
  font-size: 27px;
  dominant-baseline: central;
}

.wire {
  stroke: #fff;
  stroke-width: 2.5;
  fill: none;
}

.box {
  stroke: #f4f4f4;
  stroke-width: 3;
  fill: none;
}

.box-edge {
  stroke: #f4f4f4;
  stroke-width: 3;
  fill: none;
}

.panel-text {
  fill: #777;
  font-size: 28px;
  dominant-baseline: central;
}

.panel-text.wide {
  font-size: 26.5px;
}

.rating {
  fill: #6f6f6f;
  font-size: 17px;
  dominant-baseline: central;
}

.ring {
  stroke: #9f5cf0;
  stroke-width: 5;
  fill: none;
}

.ring-btn {
  fill: #3a3a3a;
  stroke: #9f5cf0;
  stroke-width: 3;
}

.hscroll {
  height: 10px;
  background: #555;
  position: relative;
}

.hthumb {
  position: absolute;
  left: 702px;
  top: 0;
  width: 477px;
  height: 10px;
  background: #e6e6e6;
}

.panel {
  flex: 1;
  background: #555;
  position: relative;
  display: flex;
  flex-direction: column;
  align-items: center;
}

.vthumb {
  position: absolute;
  left: 0;
  top: 1560px;
  width: 10px;
  height: 31px;
  background: #e6e6e6;
}

.corner {
  position: absolute;
  left: 0;
  top: 1782px;
  width: 10px;
  height: 10px;
  background: #222;
}

.p-chevron {
  margin-top: 23px;
  margin-left: 6px;
}

.panel-sep {
  width: 84px;
  height: 3px;
  background: #7a7a7a;
  margin-top: 27px;
  margin-left: 10px;
}

.p-plus {
  margin-top: 27px;
  margin-left: 14px;
}

.p-layers {
  margin-top: 37px;
  margin-left: 12px;
}

.p-inbox {
  margin-top: 36px;
  margin-left: 12px;
  position: relative;
  height: 28px;
}

.badge {
  position: absolute;
  left: 36px;
  top: 17px;
  width: 26px;
  height: 26px;
  border-radius: 50%;
  background: #000;
  color: #fff;
  font-size: 14px;
  line-height: 26px;
  text-align: center;
}

.strip {
  width: 76px;
  flex-shrink: 0;
  background: #3f3f3f;
  border-left: 3px solid #737373;
  padding-top: 3px;
  display: flex;
  flex-direction: column;
  align-items: center;
}

.strip-slot {
  height: 57px;
  display: flex;
  align-items: center;
  justify-content: center;
}

.strip-p {
  color: #6f6f6f;
  font-size: 44px;
  font-weight: 700;
}

.strip-dollar {
  position: relative;
  width: 40px;
  height: 38px;
  color: #6f6f6f;
  font-size: 32px;
  font-weight: 700;
  line-height: 38px;
  text-align: center;
}

.strip-dollar svg {
  position: absolute;
  left: 0;
  top: 0;
}

.strip-sep {
  width: 36px;
  height: 2px;
  background: #6f6f6f;
  margin-top: 6px;
}

/* Status bar */
.status {
  height: 42px;
  flex-shrink: 0;
  background: #3b3b3b;
  display: flex;
  align-items: center;
  color: #ddd;
}

.ok {
  margin-left: 21px;
}

.ready {
  margin-left: 28px;
  margin-top: 2px;
  font-size: 23px;
}

.status-right {
  margin-left: auto;
  display: flex;
  align-items: center;
  margin-right: 89px;
}

.bolts {
  display: flex;
  gap: 3px;
}

.sync {
  margin-left: 30px;
}

.fx {
  margin-left: 26px;
  color: #10bdb8;
  font-family: "Liberation Serif", serif;
  font-style: italic;
  font-size: 30px;
}

.flag {
  margin-left: 43px;
}

.version {
  margin-left: 42px;
  font-size: 22px;
  color: #a8a8a8;
  margin-top: 2px;
}

.version-no {
  margin-left: 12px;
  margin-top: 2px;
  font-size: 22px;
  color: #ddd;
}
</style>
